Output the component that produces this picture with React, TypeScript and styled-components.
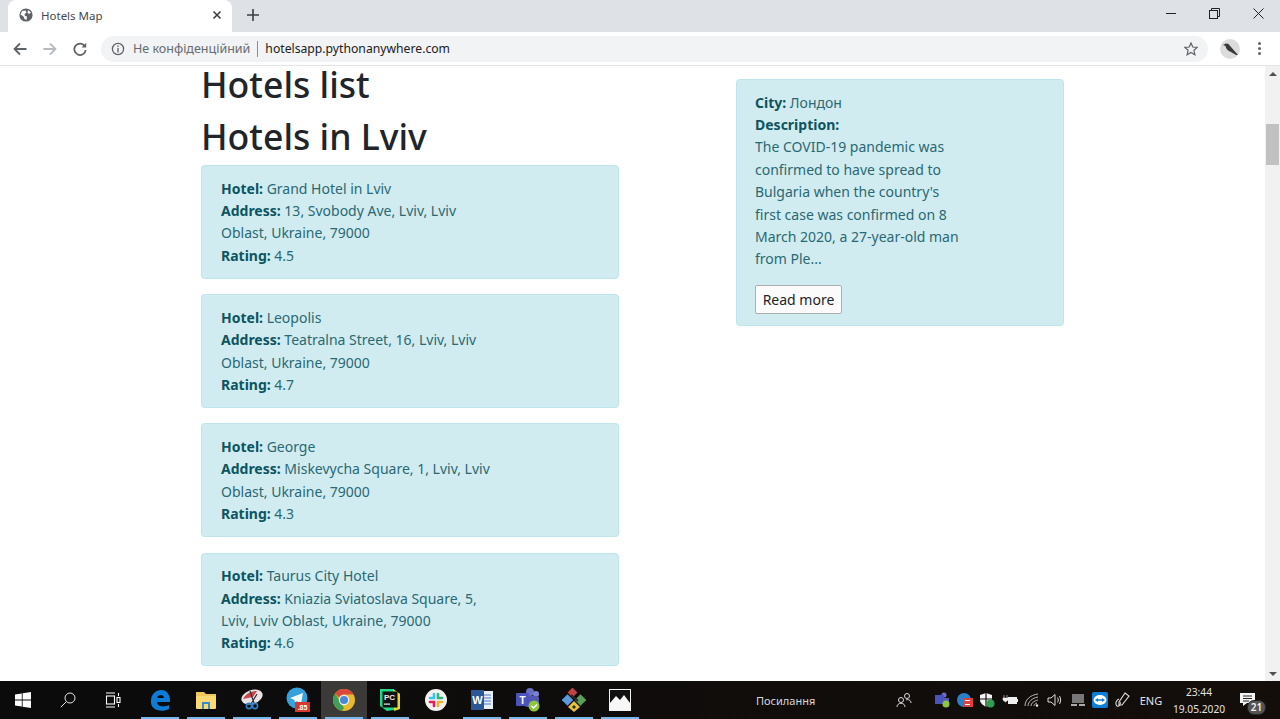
import React from "react";
import styled, { createGlobalStyle } from "styled-components";

const GlobalStyle = createGlobalStyle`
  html, body {
    margin: 0;
    padding: 0;
    height: 100%;
    overflow: hidden;
    background: #fff;
  }
  body {
    font-family: "Noto Sans", "Open Sans", sans-serif;
  }
`;

const hotels = [
  {
    name: "Grand Hotel in Lviv",
    address: ["13, Svobody Ave, Lviv, Lviv", "Oblast, Ukraine, 79000"],
    rating: "4.5",
  },
  {
    name: "Leopolis",
    address: ["Teatralna Street, 16, Lviv, Lviv", "Oblast, Ukraine, 79000"],
    rating: "4.7",
  },
  {
    name: "George",
    address: ["Miskevycha Square, 1, Lviv, Lviv", "Oblast, Ukraine, 79000"],
    rating: "4.3",
  },
  {
    name: "Taurus City Hotel",
    address: ["Kniazia Sviatoslava Square, 5,", "Lviv, Lviv Oblast, Ukraine, 79000"],
    rating: "4.6",
  },
];

const description = [
  "The COVID-19 pandemic was",
  "confirmed to have spread to",
  "Bulgaria when the country's",
  "first case was confirmed on 8",
  "March 2020, a 27-year-old man",
  "from Ple...",
];

// taskbar app icons
const EdgeIcon = () => (
  <svg width="22" height="24" viewBox="0 0 22 24">
    <path d="M2 13 C2 6 7 2 12 2 C18 2 21 7 21 12 L21 14 L8 14 C8 18 14 20 20 17 L20 21 C12 25 1 22 2 13 Z M8 10 L15 10 C15 6 9 6 8 10 Z" fill="#0d7cd6" fillRule="evenodd" />
  </svg>
);

const ExplorerIcon = () => (
  <svg width="22" height="20" viewBox="0 0 22 20">
    <path d="M1 2 H9 L11 4 H21 V8 H1 Z" fill="#f0c75e" />
    <rect x="1" y="6" width="20" height="13" rx="1" fill="#fbd872" />
    <rect x="7" y="12" width="8" height="7" fill="#2f8fd0" />
    <rect x="9" y="14" width="4" height="5" fill="#fbd872" />
  </svg>
);

const SnipIcon = () => (
  <svg width="24" height="24" viewBox="0 0 24 24">
    <ellipse cx="12" cy="9" rx="11" ry="7" transform="rotate(-20 12 9)" fill="#e9e3e3" />
    <path d="M3 11 C6 5 12 3 17 3 L13 9 Z" fill="#c9464c" />
    <path d="M10 3 L14 15 M17 6 L11 16" stroke="#2c2f38" strokeWidth="1.2" />
    <circle cx="15" cy="18" r="2.6" fill="none" stroke="#2f7fc4" strokeWidth="1.6" />
    <circle cx="9" cy="18" r="2.6" fill="none" stroke="#2f7fc4" strokeWidth="1.6" />
  </svg>
);

const TelegramIcon = () => (
  <svg width="24" height="26" viewBox="0 0 24 26">
    <circle cx="11" cy="11" r="10.5" fill="#35a2dc" />
    <path d="M4 11 L17 6 L15 17 L11 14 L9 16 L8.5 13 Z" fill="#f2f8fc" />
    <rect x="9" y="15" width="15" height="10" fill="#d7382e" />
    <BadgeText x="16.5" y="23">.85</BadgeText>
  </svg>
);

const ChromeIcon = () => (
  <svg width="22" height="22" viewBox="0 0 22 22">
    <circle cx="11" cy="11" r="11" fill="#e8b92f" />
    <path d="M11 0 A11 11 0 0 1 20.5 5.5 L11 5.5 A5.5 5.5 0 0 0 6 8.5 L2.2 4.4 A11 11 0 0 1 11 0 Z" fill="#d9483b" />
    <path d="M2.2 4.4 L6.2 11 L11 19 L9 21.8 A11 11 0 0 1 2.2 4.4 Z" fill="#3e9f55" />
    <circle cx="11" cy="11" r="5.2" fill="#eef1f6" />
    <circle cx="11" cy="11" r="4" fill="#4a86d8" />
  </svg>
);

const PyCharmIcon = () => (
  <svg width="22" height="24" viewBox="0 0 22 24">
    <path d="M1 1 L14 1 L21 6 L21 21 L8 23 L1 18 Z" fill="#21d789" />
    <path d="M14 1 L21 6 L21 21 L15 23 Z" fill="#e4d932" />
    <rect x="3.5" y="3.5" width="15" height="16" fill="#111" />
    <PcText x="5" y="11.5">PC</PcText>
    <rect x="5" y="15.5" width="6" height="1.2" fill="#eee" />
  </svg>
);

const SlackIcon = () => (
  <svg width="22" height="22" viewBox="0 0 22 22">
    <circle cx="11" cy="11" r="11" fill="#f4f1f1" />
    <path d="M9 5 V9 H5" fill="none" stroke="#36c5f0" strokeWidth="2.6" strokeLinecap="round" />
    <path d="M17 9 H13 V5" fill="none" stroke="#2eb67d" strokeWidth="2.6" strokeLinecap="round" />
    <path d="M13 17 V13 H17" fill="none" stroke="#ecb22e" strokeWidth="2.6" strokeLinecap="round" />
    <path d="M5 13 H9 V17" fill="none" stroke="#e01e5a" strokeWidth="2.6" strokeLinecap="round" />
  </svg>
);

const WordIcon = () => (
  <svg width="22" height="22" viewBox="0 0 22 22">
    <rect x="10" y="2" width="12" height="18" fill="#e8eef7" />
    <path d="M12 6 H20 M12 9 H20 M12 12 H20 M12 15 H20" stroke="#4a78bd" strokeWidth="1.2" />
    <rect x="0" y="1" width="13" height="20" fill="#2b5797" />
    <WordText x="6.5" y="15">W</WordText>
  </svg>
);

const TeamsIcon = () => (
  <svg width="26" height="26" viewBox="0 0 26 26">
    <circle cx="15" cy="5" r="4" fill="#6a6ec4" />
    <circle cx="21" cy="7" r="3" fill="#7b83d6" />
    <rect x="10" y="9" width="14" height="11" rx="2" fill="#5459b0" />
    <rect x="1" y="6" width="13" height="13" rx="1" fill="#4b53bc" />
    <TeamsText x="7.5" y="16.5">T</TeamsText>
    <circle cx="19" cy="19" r="5.5" fill="#8ec63f" />
    <path d="M16.5 19 L18.5 21 L22 17.5" fill="none" stroke="#fff" strokeWidth="1.4" />
  </svg>
);

const GitKrakenIcon = () => (
  <svg width="24" height="24" viewBox="0 0 24 24">
    <rect x="7" y="1" width="7" height="7" transform="rotate(45 10.5 4.5)" fill="#c1443f" />
    <rect x="1.5" y="8" width="8" height="8" transform="rotate(45 5.5 12)" fill="#5b9bdb" />
    <rect x="14.5" y="8" width="8" height="8" transform="rotate(45 18.5 12)" fill="#5aa05a" />
    <path d="M12 13 L18 19 L12 24 L6 19 Z" fill="#e8c23e" />
    <path d="M12 17 L14 19 L12 21 L10 19 Z" fill="#2a2a2a" />
    <path d="M9 7 L16 13" stroke="#2a2a2a" strokeWidth="2" />
  </svg>
);

const PhotosIcon = () => (
  <svg width="22" height="22" viewBox="0 0 22 22">
    <rect x="0.5" y="0.5" width="21" height="21" fill="#111" stroke="#f4f4f4" />
    <path d="M1 20 V14 L7 7 L11 11 L15 6 L21 14 V21 H1 Z" fill="#f7f7f7" />
  </svg>
);

const apps = [
  { icon: <EdgeIcon />, open: true },
  { icon: <ExplorerIcon />, open: true },
  { icon: <SnipIcon />, open: true },
  { icon: <TelegramIcon />, open: true },
  { icon: <ChromeIcon />, open: true, active: true },
  { icon: <PyCharmIcon />, open: true },
  { icon: <SlackIcon />, open: false },
  { icon: <WordIcon />, open: true },
  { icon: <TeamsIcon />, open: true },
  { icon: <GitKrakenIcon />, open: true },
  { icon: <PhotosIcon />, open: true },
];

const trayIcons = [
  <svg key="teams" width="16" height="16" viewBox="0 0 16 16">
    <circle cx="10" cy="3" r="2.5" fill="#6a6ec4" />
    <rect x="1" y="3" width="9" height="9" fill="#4b53bc" />
    <rect x="9" y="6" width="6" height="6" fill="#5459b0" />
    <circle cx="12" cy="12" r="3.5" fill="#8ec63f" />
  </svg>,
  <svg key="s" width="16" height="16" viewBox="0 0 16 16">
    <circle cx="7" cy="8" r="7" fill="#2a7fc9" />
    <rect x="6" y="6" width="10" height="9" fill="#e0403a" />
    <path d="M8 8.5 H13 M8 12.5 H13" stroke="#fff" strokeWidth="1.2" />
  </svg>,
  <svg key="shield" width="16" height="16" viewBox="0 0 16 16">
    <path d="M7 1 L13 3 V8 C13 11 10 13 7 15 C4 13 1 11 1 8 V3 Z" fill="#f4f4f4" />
    <path d="M7 1 V15 M1 7 H13" stroke="#111" strokeWidth="1.2" />
    <circle cx="11.5" cy="11.5" r="4" fill="#2e9e4f" />
  </svg>,
  <svg key="battery" width="16" height="12" viewBox="0 0 16 12">
    <path d="M2 1 V4 M5 1 V4 M1 4 H6 V6 L3.5 8 L1 6 Z" fill="#eee" stroke="#eee" strokeWidth="0.6" />
    <rect x="6" y="3" width="9" height="7" fill="#eee" />
    <rect x="15" y="5" width="1" height="3" fill="#eee" />
  </svg>,
  <svg key="wifi" width="16" height="16" viewBox="0 0 16 16" fill="none" stroke="#bbb" strokeWidth="1">
    <path d="M1 14 C1 8 6 3 14 2" />
    <path d="M4 14 C4 10 8 6 14 5" />
    <path d="M7 14 C7 11 10 9 14 8" />
    <path d="M10 14 C10 13 11 11.5 13 11" />
    <circle cx="13" cy="13.5" r="1.2" fill="#eee" stroke="none" />
  </svg>,
  <svg key="sound" width="16" height="14" viewBox="0 0 16 14" fill="none" stroke="#ddd" strokeWidth="1">
    <path d="M1 5 H4 L8 1.5 V12.5 L4 9 H1 Z" />
    <path d="M10.5 4.5 C11.5 6 11.5 8 10.5 9.5 M12.5 3 C14 5.5 14 8.5 12.5 11" />
  </svg>,
  <svg key="monitor" width="14" height="14" viewBox="0 0 14 14">
    <rect x="1" y="1" width="12" height="9" fill="#777" />
    <rect x="0" y="11" width="6" height="2" fill="#aaa" />
    <rect x="8" y="11" width="6" height="2" fill="#aaa" />
  </svg>,
  <svg key="viewer" width="16" height="16" viewBox="0 0 16 16">
    <rect width="16" height="16" rx="2" fill="#0e7ed6" />
    <ellipse cx="8" cy="8" rx="6.5" ry="5" fill="#fff" />
    <path d="M3 8 L6 6 V7.2 H10 V6 L13 8 L10 10 V8.8 H6 V10 Z" fill="#0e7ed6" />
  </svg>,
  <svg key="pen" width="16" height="16" viewBox="0 0 16 16" fill="none" stroke="#ddd" strokeWidth="1.1">
    <path d="M10 1 L14 4 L7 13 L4 13 L4 10 Z" />
    <path d="M4 7 C1 8 0 12 2 14 C4 15 6 12 5 10" />
  </svg>,
];

export default function App() {
  return (
    <Screen>
      <GlobalStyle />
      <TabStrip>
        <Tab>
          <svg width="14" height="14" viewBox="0 0 14 14">
            <circle cx="7" cy="7" r="6.6" fill="#5f6368" />
            <path d="M3 3 L6.5 2.5 L7.5 4.5 L5.5 6 L6 8 L8 8.5 L7.5 12 L5.5 11 L4.5 8.5 L1.5 6.5 Z M9 2 L12 4.5 L10 6 L8.5 4.5 Z" fill="#fff" />
          </svg>
          <TabTitle>Hotels Map</TabTitle>
          <svg width="10" height="10" viewBox="0 0 10 10" stroke="#3c4043" strokeWidth="1.6">
            <path d="M1.5 1.5 L8.5 8.5 M8.5 1.5 L1.5 8.5" />
          </svg>
        </Tab>
        <NewTab>
          <svg width="12" height="12" viewBox="0 0 12 12" stroke="#3c4043" strokeWidth="1.6">
            <path d="M6 0 V12 M0 6 H12" />
          </svg>
        </NewTab>
        <WindowButtons>
          <WindowButton>
            <svg width="11" height="11" viewBox="0 0 11 11" stroke="#222" strokeWidth="1">
              <path d="M0 5.5 H10" />
            </svg>
          </WindowButton>
          <WindowButton>
            <svg width="11" height="11" viewBox="0 0 11 11" fill="none" stroke="#222" strokeWidth="1">
              <rect x="0.5" y="2.5" width="8" height="8" />
              <path d="M2.5 2.5 V0.5 H10.5 V8.5 H8.5" />
            </svg>
          </WindowButton>
          <WindowButton>
            <svg width="11" height="11" viewBox="0 0 11 11" stroke="#222" strokeWidth="1">
              <path d="M0.5 0.5 L10.5 10.5 M10.5 0.5 L0.5 10.5" />
            </svg>
          </WindowButton>
        </WindowButtons>
      </TabStrip>

      <Toolbar>
        <NavButtons>
          <svg width="14" height="14" viewBox="0 0 14 14" fill="none" stroke="#5f6368" strokeWidth="1.8">
            <path d="M13.5 7 H1.5 M7 1.5 L1.5 7 L7 12.5" />
          </svg>
          <svg width="14" height="14" viewBox="0 0 14 14" fill="none" stroke="#b7babe" strokeWidth="1.8">
            <path d="M0.5 7 H12.5 M7 1.5 L12.5 7 L7 12.5" />
          </svg>
          <svg width="14" height="14" viewBox="0 0 14 14" fill="none" stroke="#5f6368" strokeWidth="1.8">
            <path d="M12 4.5 A5.7 5.7 0 1 0 12.7 8" />
            <path d="M13.2 0.8 V5.4 H8.6 Z" fill="#5f6368" stroke="none" />
          </svg>
        </NavButtons>
        <Omnibox>
          <svg width="14" height="14" viewBox="0 0 14 14" fill="none" stroke="#5f6368" strokeWidth="1.3">
            <circle cx="7" cy="7" r="5.6" />
            <path d="M7 6 V10.4 M7 3.6 V5" />
          </svg>
          <SecurityLabel>Не конфіденційний</SecurityLabel>
          <OmniDivider />
          <UrlText>hotelsapp.pythonanywhere.com</UrlText>
          <OmniStar>
            <svg width="14" height="14" viewBox="0 0 14 14" fill="none" stroke="#5f6368" strokeWidth="1.2">
              <path d="M7 1 L8.8 5 L13.2 5.4 L9.9 8.3 L10.9 12.7 L7 10.4 L3.1 12.7 L4.1 8.3 L0.8 5.4 L5.2 5 Z" />
            </svg>
          </OmniStar>
        </Omnibox>
        <Avatar>
          <svg width="20" height="20" viewBox="0 0 20 20">
            <circle cx="10" cy="10" r="10" fill="#dcdcdc" />
            <path d="M3 6 L6 4.5 C8 4 9.5 6 11 8 L18 16 L16 16 L11 13 C8 12 6 10 5.5 7 Z" fill="#3a3a3a" />
          </svg>
        </Avatar>
        <MenuDots>
          <i />
          <i />
          <i />
        </MenuDots>
      </Toolbar>

      <Viewport>
        <PageContent>
          <LeftColumn>
            <PageTitle>Hotels list</PageTitle>
            <PageTitle>Hotels in Lviv</PageTitle>
            {hotels.map((hotel) => (
              <HotelCard key={hotel.name}>
                <Line>
                  <b>Hotel:</b> {hotel.name}
                </Line>
                <Line>
                  <b>Address:</b> {hotel.address[0]}
                </Line>
                <Line>{hotel.address[1]}</Line>
                <Line>
                  <b>Rating:</b> {hotel.rating}
                </Line>
              </HotelCard>
            ))}
          </LeftColumn>
          <RightColumn>
            <NewsCard>
              <Line>
                <b>City:</b> Лондон
              </Line>
              <Line>
                <b>Description:</b>
              </Line>
              {description.map((line) => (
                <Line key={line}>{line}</Line>
              ))}
              <ReadMore>Read more</ReadMore>
            </NewsCard>
          </RightColumn>
        </PageContent>
        <Scrollbar>
          <ScrollArrow $up />
          <ScrollThumb />
          <ScrollArrow />
        </Scrollbar>
      </Viewport>

      <Taskbar>
        <StartButton>
          <svg width="16" height="16" viewBox="0 0 16 16" fill="#fff">
            <path d="M0 2.4 L6.8 1.4 V7.6 H0 Z M7.6 1.3 L16 0 V7.6 H7.6 Z M0 8.4 H6.8 V14.6 L0 13.6 Z M7.6 8.4 H16 V16 L7.6 14.7 Z" />
          </svg>
        </StartButton>
        <StartButton>
          <svg width="16" height="16" viewBox="0 0 16 16" fill="none" stroke="#e8e8e8" strokeWidth="1">
            <circle cx="10" cy="6" r="5" />
            <path d="M6.3 9.7 L0.8 15.2" />
          </svg>
        </StartButton>
        <StartButton>
          <svg width="16" height="16" viewBox="0 0 16 16" fill="none" stroke="#fff" strokeWidth="1.1">
            <path d="M1 1 H10 M1 15 H10" />
            <rect x="1.5" y="4" width="8" height="8" />
            <path d="M13.5 1 V4 M13.5 12 V15" />
            <rect x="12" y="5.5" width="3" height="5" />
          </svg>
        </StartButton>
        <AppList>
          {apps.map((app, index) => (
            <AppSlot key={index} $active={app.active}>
              {app.icon}
              {app.open && <OpenMark />}
            </AppSlot>
          ))}
        </AppList>
        <LinksLabel>Посилання</LinksLabel>
        <Tray>
          <PeopleSlot>
            <svg width="16" height="16" viewBox="0 0 16 16" fill="none" stroke="#ddd" strokeWidth="1">
              <circle cx="5" cy="8" r="2.5" />
              <path d="M1 15 C1 10 9 10 9 15" />
              <circle cx="11" cy="4" r="2.5" />
              <path d="M10 8 C12 7 15 8 15 11" />
            </svg>
          </PeopleSlot>
          {trayIcons.map((icon) => (
            <TraySlot key={icon.key}>{icon}</TraySlot>
          ))}
          <LangLabel>ENG</LangLabel>
          <Clock>
            <span>23:44</span>
            <span>19.05.2020</span>
          </Clock>
          <NotifySlot>
            <svg width="16" height="14" viewBox="0 0 16 14">
              <path d="M0 0 H15 V10 H7 L3 13 V10 H0 Z" fill="#f2f2f2" />
              <path d="M3 3 H12 M3 5.5 H12 M3 8 H9" stroke="#222" strokeWidth="1" />
            </svg>
            <NotifyBadge>21</NotifyBadge>
          </NotifySlot>
        </Tray>
      </Taskbar>
    </Screen>
  );
}

const BadgeText = styled.text`
  font-family: "Liberation Sans", sans-serif;
  font-size: 7px;
  font-weight: 700;
  fill: #fff;
  text-anchor: middle;
`;

const PcText = styled.text`
  font-family: "Liberation Sans", sans-serif;
  font-size: 8px;
  font-weight: 700;
  fill: #eee;
`;

const WordText = styled.text`
  font-family: "Liberation Sans", sans-serif;
  font-size: 11px;
  font-weight: 700;
  fill: #fff;
  text-anchor: middle;
`;

const TeamsText = styled.text`
  font-family: "Liberation Sans", sans-serif;
  font-size: 10px;
  font-weight: 700;
  fill: #fff;
  text-anchor: middle;
`;

const Screen = styled.div`
  width: 1280px;
  height: 719px;
  display: flex;
  flex-direction: column;
  overflow: hidden;
`;

const TabStrip = styled.div`
  height: 32px;
  flex: none;
  display: flex;
  align-items: flex-end;
  background: #dee1e6;
  padding-left: 8px;
`;

const Tab = styled.div`
  width: 224px;
  height: 32px;
  box-sizing: border-box;
  display: flex;
  align-items: center;
  padding: 0 10px 2px 11px;
  background: #fff;
  border-radius: 8px 8px 0 0;
`;

const TabTitle = styled.span`
  flex: 1;
  margin-left: 8px;
  font-size: 11.5px;
  color: #45484c;
`;

const NewTab = styled.div`
  width: 42px;
  height: 32px;
  padding-bottom: 2px;
  box-sizing: border-box;
  display: flex;
  align-items: center;
  justify-content: center;
`;

const WindowButtons = styled.div`
  margin-left: auto;
  height: 32px;
  display: flex;
`;

const WindowButton = styled.div`
  width: 43.5px;
  height: 26px;
  display: flex;
  align-items: center;
  justify-content: center;
`;

const Toolbar = styled.div`
  height: 33px;
  flex: none;
  display: flex;
  align-items: center;
  box-sizing: content-box;
  background: #fff;
  border-bottom: 1px solid #e4e4e4;
  padding: 0 0 0 13px;
`;

const NavButtons = styled.div`
  display: flex;
  gap: 16px;
  margin-right: 14px;
  align-items: center;
`;

const Omnibox = styled.div`
  width: 1107px;
  height: 26px;
  box-sizing: border-box;
  display: flex;
  align-items: center;
  padding: 0 10px;
  background: #f1f3f4;
  border-radius: 13px;
`;

const SecurityLabel = styled.span`
  margin-left: 8px;
  font-size: 12.5px;
  color: #676a6e;
`;

const OmniDivider = styled.span`
  width: 1px;
  height: 16px;
  margin: 0 7px 0 7px;
  background: #8b8e92;
`;

const UrlText = styled.span`
  font-size: 12.2px;
  color: #202124;
`;

const OmniStar = styled.span`
  margin-left: auto;
  display: flex;
`;

const Avatar = styled.div`
  margin-left: 12px;
  display: flex;
`;

const MenuDots = styled.div`
  margin-left: 18px;
  display: flex;
  flex-direction: column;
  gap: 2px;

  i {
    display: block;
    width: 3px;
    height: 3px;
    border-radius: 50%;
    background: #5f6368;
  }
`;

const Viewport = styled.div`
  flex: 1;
  min-height: 0;
  display: flex;
  background: #fff;
`;

const PageContent = styled.div`
  flex: 1;
  display: flex;
  padding-left: 201px;
`;

const LeftColumn = styled.div`
  width: 417.5px;
  flex: none;
`;

const PageTitle = styled.h1`
  margin: 0 0 4px;
  height: 48px;
  line-height: 36px;
  font-size: 35.6px;
  font-weight: 500;
  color: #212529;

  & + & {
    margin-bottom: -1px;
  }
`;

const HotelCard = styled.div`
  box-sizing: border-box;
  height: 113.8px;
  margin-bottom: 15.4px;
  padding: 11.6px 19px 0;
  background: #d1ecf1;
  border: 1px solid #bee5eb;
  border-radius: 3.6px;
  color: #2a6873;
`;

const RightColumn = styled.div`
  width: 328px;
  flex: none;
  margin-left: 117px;
  padding-top: 13px;
`;

const NewsCard = styled(HotelCard)`
  height: 247px;
  margin: 0;
  padding-left: 18.5px;
`;

const Line = styled.div`
  font-size: 14px;
  line-height: 22.4px;
  white-space: nowrap;

  b {
    font-weight: 700;
    color: #0c5460;
  }
`;

const ReadMore = styled.button`
  display: block;
  box-sizing: border-box;
  width: 87px;
  height: 29px;
  margin-top: 14px;
  padding: 0;
  background: #fbfbfb;
  border: 1px solid #adadad;
  border-radius: 2px;
  font-family: inherit;
  font-size: 14px;
  color: #212529;
`;

const Scrollbar = styled.div`
  width: 15px;
  flex: none;
  display: flex;
  flex-direction: column;
  align-items: center;
  background: #f1f1f1;
`;

const ScrollArrow = styled.div<{ $up?: boolean }>`
  width: 0;
  height: 0;
  margin: ${(p) => (p.$up ? "6px 0 0" : "auto 0 5px")};
  border-left: 4px solid transparent;
  border-right: 4px solid transparent;
  ${(p) => (p.$up ? "border-bottom: 4px solid #505050;" : "border-top: 4px solid #505050;")}
`;

const ScrollThumb = styled.div`
  width: 13px;
  height: 41px;
  margin-top: 48px;
  background: #c1c1c1;
`;

const Taskbar = styled.div`
  height: 38px;
  flex: none;
  display: flex;
  align-items: stretch;
  background: linear-gradient(to right, #0b0b0c, #130e0a);
`;

const StartButton = styled.div`
  width: 45px;
  flex: none;
  display: flex;
  align-items: center;
  justify-content: center;
`;

const AppList = styled.div`
  display: flex;
  padding-left: 2px;
`;

const AppSlot = styled.div<{ $active?: boolean }>`
  position: relative;
  width: 46px;
  flex: none;
  display: flex;
  align-items: center;
  justify-content: center;
  background: ${(p) => (p.$active ? "#3b3a39" : "transparent")};
`;

const OpenMark = styled.span`
  position: absolute;
  left: 4px;
  right: 4px;
  bottom: 0;
  height: 2px;
  background: #76b9ed;
`;

const LinksLabel = styled.span`
  margin-left: 113px;
  align-self: center;
  font-size: 11px;
  color: #d8d8d8;
`;

const Tray = styled.div`
  margin-left: auto;
  display: flex;
  align-items: center;
`;

const PeopleSlot = styled.div`
  width: 32px;
  display: flex;
  justify-content: center;
  margin-right: 11px;
`;

const TraySlot = styled.div`
  width: 22.6px;
  display: flex;
  justify-content: center;
`;

const LangLabel = styled.span`
  width: 34px;
  text-align: center;
  font-size: 11px;
  color: #e4e4e4;
`;

const Clock = styled.div`
  width: 62px;
  margin-right: 2px;
  display: flex;
  flex-direction: column;
  align-items: center;
  gap: 3px;
  font-size: 10.2px;
  line-height: 14px;
  color: #e4e4e4;
`;

const NotifySlot = styled.div`
  position: relative;
  width: 48px;
  box-sizing: border-box;
  padding-right: 17px;
  display: flex;
  justify-content: center;
`;

const NotifyBadge = styled.span`
  position: absolute;
  left: 15px;
  top: 7px;
  width: 17px;
  height: 13px;
  border-radius: 7px;
  background: #555;
  border: 1px solid #222;
  text-align: center;
  font-size: 10px;
  font-weight: 600;
  line-height: 13px;
  color: #f2f2f2;
`;
